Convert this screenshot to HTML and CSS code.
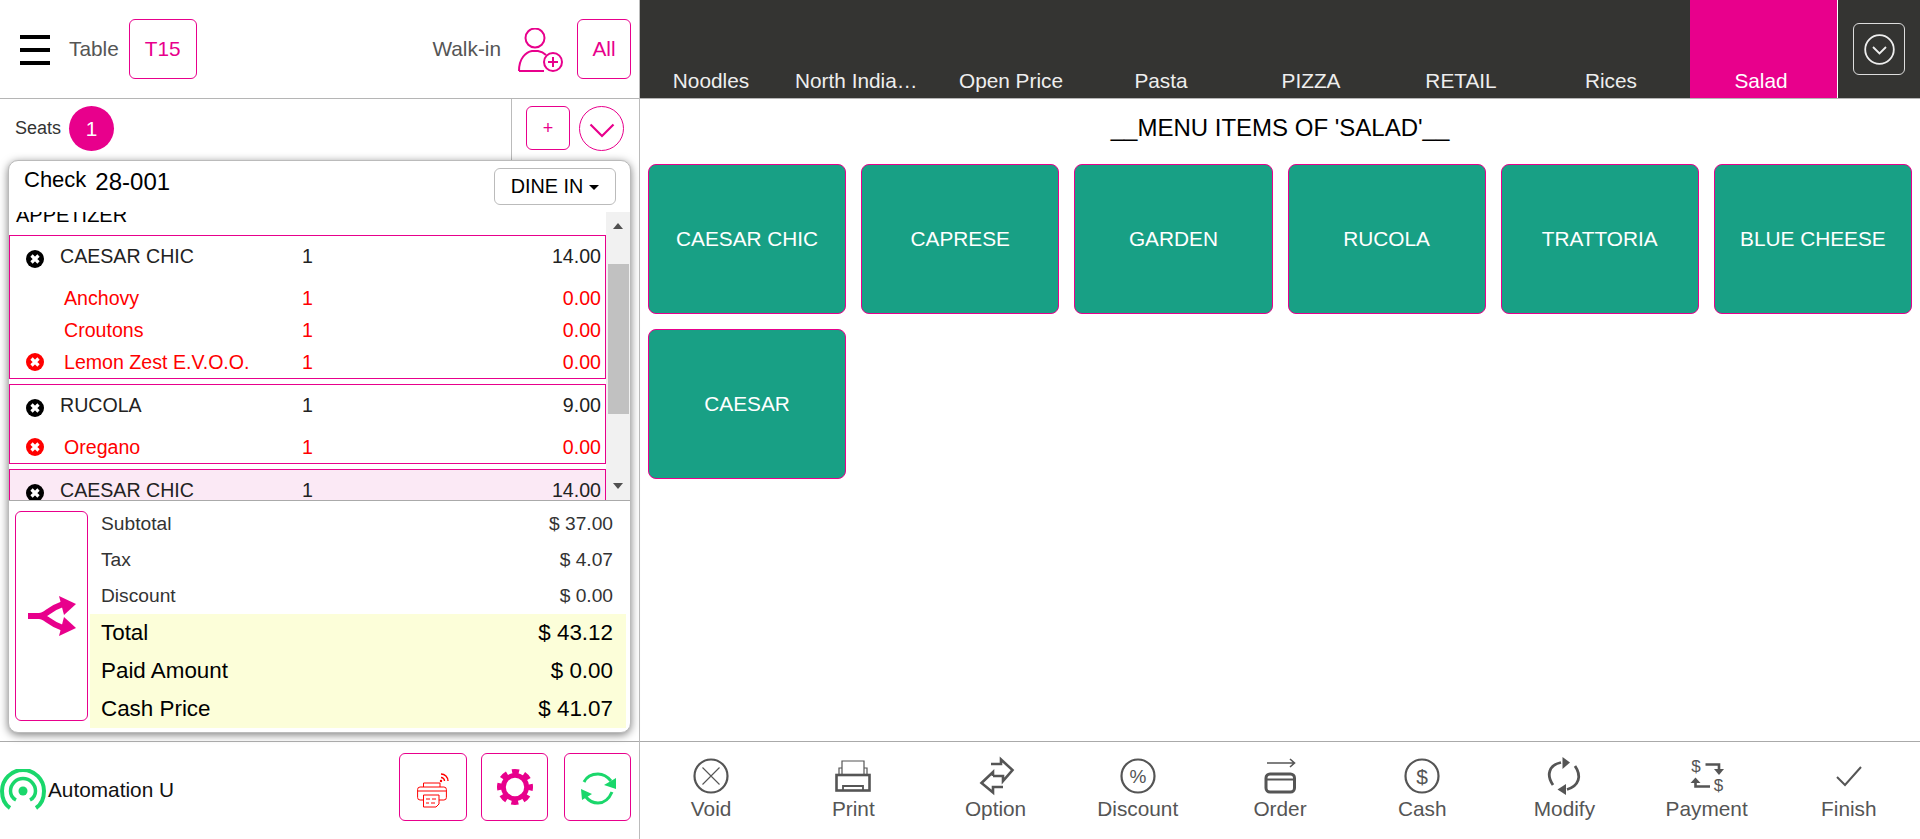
FILE: index.html
```html
<!DOCTYPE html>
<html lang="en">

<head>
    <meta charset="UTF-8">
    <title>POS Menu</title>
    <link rel="stylesheet" href="styles.css">
</head>

<body>
    <div class="app">
        <!-- Left: order -->
        <section class="order">
            <header class="orderHead">
                <div class="burger"><span></span><span></span><span></span></div>
                <span class="headLabel tableLabel">Table</span>
                <button class="pinkBtn tableBtn">T15</button>
                <span class="headLabel walkLabel">Walk-in</span>
                <svg class="personIcon" viewBox="0 0 46 44" fill="none" stroke="#e8008c" stroke-width="2">
                    <circle cx="17" cy="10" r="9.500" />
                    <path d="M1 43C1 30 8 24 14 23H20C23 23.500 26 25 28 27M1 43H26" />
                    <circle cx="35" cy="34" r="9" fill="#fff" />
                    <path d="M35 29V39M30 34H40" />
                </svg>
                <button class="pinkBtn allBtn">All</button>
            </header>

            <div class="seats">
                <div class="seatsLeft">
                    <span class="seatsLabel">Seats</span>
                    <span class="seatBadge">1</span>
                </div>
                <div class="seatsRight">
                    <button class="pinkBtn addSeat">+</button>
                    <button class="pinkBtn seatToggle">
                        <svg width="26" height="15" viewBox="0 0 26 15" fill="none" stroke="#e8008c" stroke-width="2.200">
                            <path d="M1.500 1.500L13 13L24.500 1.500" />
                        </svg>
                    </button>
                </div>
            </div>

            <div class="checkCard">
                <div class="checkHead">
                    <span class="checkLabel">Check</span>
                    <span class="checkNo">28-001</span>
                    <button class="dineBtn">DINE IN<i class="caret"></i></button>
                </div>

                <div class="listWrap">
                    <div class="list">
                        <div class="listInner">
                            <div class="course">APPETIZER</div>

                            <div class="item">
                                <div class="line main">
                                    <svg class="xIcon" viewBox="0 0 18 18"><circle cx="9" cy="9" r="9" fill="#000" /><path d="M5.500 5.500L12.500 12.500M12.500 5.500L5.500 12.500" stroke="#fff" stroke-width="3.200" /></svg>
                                    <span class="name">CAESAR CHIC</span><span class="qty">1</span><span class="price">14.00</span>
                                </div>
                                <div class="line mod">
                                    <span class="noIcon"></span>
                                    <span class="name">Anchovy</span><span class="qty">1</span><span class="price">0.00</span>
                                </div>
                                <div class="line mod">
                                    <span class="noIcon"></span>
                                    <span class="name">Croutons</span><span class="qty">1</span><span class="price">0.00</span>
                                </div>
                                <div class="line mod">
                                    <svg class="xIcon" viewBox="0 0 18 18"><circle cx="9" cy="9" r="9" fill="#f00" /><path d="M5.500 5.500L12.500 12.500M12.500 5.500L5.500 12.500" stroke="#fff" stroke-width="3.200" /></svg>
                                    <span class="name">Lemon Zest E.V.O.O.</span><span class="qty">1</span><span class="price">0.00</span>
                                </div>
                            </div>

                            <div class="item">
                                <div class="line main">
                                    <svg class="xIcon" viewBox="0 0 18 18"><circle cx="9" cy="9" r="9" fill="#000" /><path d="M5.500 5.500L12.500 12.500M12.500 5.500L5.500 12.500" stroke="#fff" stroke-width="3.200" /></svg>
                                    <span class="name">RUCOLA</span><span class="qty">1</span><span class="price">9.00</span>
                                </div>
                                <div class="line mod">
                                    <svg class="xIcon" viewBox="0 0 18 18"><circle cx="9" cy="9" r="9" fill="#f00" /><path d="M5.500 5.500L12.500 12.500M12.500 5.500L5.500 12.500" stroke="#fff" stroke-width="3.200" /></svg>
                                    <span class="name">Oregano</span><span class="qty">1</span><span class="price">0.00</span>
                                </div>
                            </div>

                            <div class="item selected">
                                <div class="line main">
                                    <svg class="xIcon" viewBox="0 0 18 18"><circle cx="9" cy="9" r="9" fill="#000" /><path d="M5.500 5.500L12.500 12.500M12.500 5.500L5.500 12.500" stroke="#fff" stroke-width="3.200" /></svg>
                                    <span class="name">CAESAR CHIC</span><span class="qty">1</span><span class="price">14.00</span>
                                </div>
                            </div>
                        </div>
                    </div>
                    <div class="scrollbar">
                        <i class="arrowUp"></i>
                        <div class="thumb"></div>
                        <i class="arrowDown"></i>
                    </div>
                </div>

                <div class="totals">
                    <button class="pinkBtn splitBtn">
                        <svg width="48" height="40" viewBox="0 0 48 40" fill="#e8008c">
                            <path d="M0 20H11C18 20 20 13 35 8M11 20C18 20 20 27 35 32" fill="none" stroke="#e8008c" stroke-width="6" />
                            <path d="M31 0L48 8L36 19Z" />
                            <path d="M31 40L48 32L36 21Z" />
                        </svg>
                    </button>
                    <div class="totalRows">
                        <div class="sumRow"><span>Subtotal</span><span>$ 37.00</span></div>
                        <div class="sumRow"><span>Tax</span><span>$ 4.07</span></div>
                        <div class="sumRow"><span>Discount</span><span>$ 0.00</span></div>
                        <div class="band">
                            <div class="bandRow"><span>Total</span><span>$ 43.12</span></div>
                            <div class="bandRow"><span>Paid Amount</span><span>$ 0.00</span></div>
                            <div class="bandRow"><span>Cash Price</span><span>$ 41.07</span></div>
                        </div>
                    </div>
                </div>
            </div>

            <footer class="orderFoot">
                <svg class="signal" width="46" height="42" viewBox="0 0 46 42" fill="none" stroke="#1ad76b">
                    <path d="M10 39C4 35 2 28 2 22A21 21 0 0 1 44 22C44 28 42 35 36 39" stroke-width="4" />
                    <path d="M16 31C12 29 10.500 25 10.500 22A12.500 12.500 0 0 1 35.500 22C35.500 25 34 29 30 31" stroke-width="3.500" />
                    <circle cx="23" cy="22" r="4.500" fill="#1ad76b" stroke="none" />
                </svg>
                <span class="userName">Automation U</span>
                <button class="pinkBtn footBtn printerBtn">
                    <svg class="printerIcon" width="32" height="38" viewBox="0 0 32 38" fill="none" stroke="#f00" stroke-width="1">
                        <path d="M6.500 17V13H23V17" />
                        <rect x="0.600" y="17" width="28.800" height="13" rx="2.500" />
                        <path d="M1 21H29" />
                        <path d="M6.500 25H22V34L19 37H6.500Z" fill="#fff" />
                        <path d="M9 29H13M15 29H19M9 33H12M14 33H18" />
                        <circle cx="24" cy="11" r="1.200" fill="#f00" stroke="none" />
                        <path d="M24 7.500A3.500 3.500 0 0 1 27.500 11M24 4A7 7 0 0 1 31 11" stroke-width="1.400" />
                    </svg>
                </button>
                <button class="pinkBtn footBtn gearBtn">
                    <svg width="36" height="36" viewBox="0 0 36 36" fill="none" stroke="#e8008c">
                        <circle cx="18" cy="18" r="11.600" stroke-width="4.800" />
                        <circle cx="18" cy="18" r="15.500" stroke-width="5" stroke-dasharray="7 5.180" stroke-dashoffset="3.500" />
                    </svg>
                </button>
                <button class="pinkBtn footBtn refreshBtn">
                    <svg width="36" height="36" viewBox="0 0 36 36" fill="none" stroke="#1ad76b" stroke-width="3">
                        <path d="M4 13C7 7 12 5 18 5C23 5 27 7 31 12" />
                        <path d="M32 23C29 30 24 34 18 34C13 34 9 32 6 28" />
                        <path d="M36 9L36 20L24 16Z" fill="#1ad76b" stroke="none" />
                        <path d="M1 20L12 25L2 31Z" fill="#1ad76b" stroke="none" />
                    </svg>
                </button>
            </footer>
        </section>

        <!-- Right: menu -->
        <section class="menu">
            <nav class="tabBar">
                <div class="tabs">
                    <a class="tab">Noodles</a>
                    <a class="tab tabLong">North India…</a>
                    <a class="tab">Open Price</a>
                    <a class="tab">Pasta</a>
                    <a class="tab">PIZZA</a>
                    <a class="tab">RETAIL</a>
                    <a class="tab">Rices</a>
                    <a class="tab active">Salad</a>
                </div>
                <div class="tabMore">
                    <button class="moreBtn">
                        <svg width="31" height="31" viewBox="0 0 31 31" fill="none" stroke="#eee" stroke-width="1.800">
                            <circle cx="15.500" cy="15.500" r="14.300" />
                            <path d="M9 13L15.500 19.500L22 13" />
                        </svg>
                    </button>
                </div>
            </nav>

            <div class="menuBody">
                <h2 class="menuTitle">__MENU ITEMS OF 'SALAD'__</h2>
                <div class="menuGrid">
                    <button class="menuItem">CAESAR CHIC</button>
                    <button class="menuItem">CAPRESE</button>
                    <button class="menuItem">GARDEN</button>
                    <button class="menuItem">RUCOLA</button>
                    <button class="menuItem">TRATTORIA</button>
                    <button class="menuItem">BLUE CHEESE</button>
                    <button class="menuItem">CAESAR</button>
                </div>
            </div>

            <footer class="actions">
                <div class="action">
                    <svg viewBox="0 0 36 36" fill="none" stroke="#555">
                        <circle cx="18" cy="18" r="16.500" stroke-width="2.200" />
                        <path d="M9.500 9.500L26.500 26.500M26.500 9.500L9.500 26.500" stroke-width="1.100" />
                    </svg>
                    <span>Void</span>
                </div>
                <div class="action">
                    <svg viewBox="0 0 36 36" fill="none" stroke="#555">
                        <path d="M7 16V3H29V16" stroke-width="1.200" />
                        <path d="M4 16V10H7M32 16V10H29" stroke-width="1.200" />
                        <rect x="1.500" y="17" width="33" height="15.500" stroke-width="2.600" />
                        <path d="M8 32V28H28V32" stroke-width="1.800" />
                    </svg>
                    <span>Print</span>
                </div>
                <div class="action">
                    <svg viewBox="0 0 36 36" fill="none" stroke="#555" stroke-width="2.600">
                        <path d="M13 6H23V1.500L34.500 12L25 23V18H15" />
                        <path d="M25 29H15V34.500L3.500 25L15 14V18" />
                    </svg>
                    <span>Option</span>
                </div>
                <div class="action">
                    <svg viewBox="0 0 36 36" fill="none" stroke="#555">
                        <circle cx="18" cy="18" r="16.500" stroke-width="2.200" />
                        <text class="glyph" x="18" y="25" text-anchor="middle" font-size="19" fill="#555" stroke="none">%</text>
                    </svg>
                    <span>Discount</span>
                </div>
                <div class="action">
                    <svg viewBox="0 0 36 36" fill="none" stroke="#555">
                        <path d="M5 5H32M28 1L32.500 5L28 9" stroke-width="1.600" />
                        <rect x="4" y="16" width="28.500" height="18" rx="4" stroke-width="3" />
                        <path d="M4 21.500H32" stroke-width="2" />
                    </svg>
                    <span>Order</span>
                </div>
                <div class="action">
                    <svg viewBox="0 0 36 36" fill="none" stroke="#555">
                        <circle cx="18" cy="18" r="16.500" stroke-width="2.200" />
                        <text class="glyph" x="18" y="25.500" text-anchor="middle" font-size="21" fill="#555" stroke="none">$</text>
                    </svg>
                    <span>Cash</span>
                </div>
                <div class="action">
                    <svg viewBox="0 0 36 36" fill="none" stroke="#555">
                        <path d="M7 27C0 17 3 7 15 4.500" stroke-width="2.800" />
                        <path d="M29 8C36 18 33 28 21 31.500" stroke-width="2.800" />
                        <path d="M16.500 -1L24 4.500L16.500 11Z" fill="#555" stroke="none" />
                        <path d="M20 26L11.500 31.500L20 37Z" fill="#555" stroke="none" />
                    </svg>
                    <span>Modify</span>
                </div>
                <div class="action">
                    <svg viewBox="0 0 36 36" fill="none" stroke="#555">
                        <text class="glyph" x="7" y="13.500" text-anchor="middle" font-size="17" fill="#555" stroke="none">$</text>
                        <text class="glyph" x="29.500" y="32.500" text-anchor="middle" font-size="17" fill="#555" stroke="none">$</text>
                        <path d="M16.500 6.500H30V12" stroke-width="2.600" />
                        <path d="M25 11H35L30 17Z" fill="#555" stroke="none" />
                        <path d="M21 28.500H6.500V24" stroke-width="2.600" />
                        <path d="M1.500 25H11.500L6.500 19.500Z" fill="#555" stroke="none" />
                    </svg>
                    <span>Payment</span>
                </div>
                <div class="action">
                    <svg viewBox="0 0 36 36" fill="none" stroke="#555" stroke-width="2">
                        <path d="M6 19L14 27L30 9" />
                    </svg>
                    <span>Finish</span>
                </div>
            </footer>
        </section>
    </div>
</body>

</html>
```
FILE: styles.css
```css
* {
    box-sizing: border-box;
}

html,
body {
    margin: 0;
    height: 100%;
    overflow: hidden;
    background-color: white;
    font-family: "Liberation Sans", Arial, sans-serif;
}

button {
    font: inherit;
    padding: 0;
    background: none;
    cursor: pointer;
}

.app {
    display: flex;
    width: 1920px;
    height: 839px;
}

.pinkBtn {
    display: flex;
    align-items: center;
    justify-content: center;
    flex-shrink: 0;
    border: 1px solid #e8008c;
    border-radius: 6px;
    background-color: white;
    color: #e8008c;
}

/* Left panel */
.order {
    display: flex;
    flex-direction: column;
    width: 640px;
    border-right: 1px solid #bbb;
}

.orderHead {
    display: flex;
    align-items: center;
    height: 99px;
    padding: 0 8px 0 20px;
    border-bottom: 1px solid #b5b5b5;
}

.burger {
    display: flex;
    flex-direction: column;
    gap: 9.500px;
    width: 30px;
    margin-top: 2px;
}

.burger span {
    height: 3.500px;
    background-color: black;
}

.headLabel {
    font-size: 20.800px;
    color: #555;
}

.tableLabel {
    margin-left: 19px;
}

.tableBtn {
    width: 68px;
    height: 60px;
    margin-left: 10px;
    font-size: 20.800px;
}

.walkLabel {
    margin-left: auto;
}

.personIcon {
    width: 46px;
    height: 44px;
    margin: 2px 13px 0 17px;
}

.allBtn {
    width: 54px;
    height: 60px;
    font-size: 20.800px;
}

.seats {
    display: flex;
    height: 61px;
}

.seatsLeft {
    display: flex;
    flex: 1;
    align-items: center;
    gap: 8px;
    padding-left: 15px;
    padding-bottom: 2px;
}

.seatsLabel {
    font-size: 18px;
    color: #333;
}

.seatBadge {
    display: flex;
    align-items: center;
    justify-content: center;
    width: 45px;
    height: 45px;
    border-radius: 50%;
    background-color: #e8008c;
    color: white;
    font-size: 20.800px;
}

.seatsRight {
    display: flex;
    align-items: flex-start;
    gap: 9px;
    width: 128px;
    padding: 7px 0 0 14px;
    border-left: 1px solid #bbb;
}

.addSeat {
    width: 44px;
    height: 44px;
    font-size: 18px;
}

.seatToggle {
    width: 45px;
    height: 45px;
    border-radius: 50%;
    padding-top: 3px;
}

/* Check card */
.checkCard {
    display: flex;
    flex-direction: column;
    width: 623px;
    height: 573px;
    margin-left: 8px;
    border: 1px solid #bbb;
    border-radius: 10px;
    background-color: white;
    box-shadow: 0 2px 8px rgba(0, 0, 0, 0.5);
    overflow: hidden;
}

.checkHead {
    display: flex;
    height: 51px;
    padding: 7px 14px 0 15px;
}

.checkLabel {
    font-size: 22px;
    line-height: 24px;
}

.checkNo {
    margin: 1px 0 0 9px;
    font-size: 24px;
    line-height: 26px;
}

.dineBtn {
    display: flex;
    align-items: center;
    justify-content: center;
    gap: 6px;
    width: 122px;
    height: 37px;
    margin-left: auto;
    border: 1px solid #bbb;
    border-radius: 6px;
    background-color: white;
    font-size: 19.800px;
    color: black;
}

.caret {
    width: 0;
    height: 0;
    margin-top: 2px;
    border-top: 5.500px solid black;
    border-left: 5.500px solid transparent;
    border-right: 5.500px solid transparent;
}

.listWrap {
    display: flex;
    height: 289px;
    border-bottom: 1px solid #aaa;
}

.list {
    flex: 1;
    overflow: hidden;
}

/* list is scrolled down a little in the picture */
.listInner {
    margin-top: -9px;
}

.course {
    padding-left: 7px;
    height: 32px;
    font-size: 20px;
    line-height: 24px;
    color: black;
}

.item {
    margin-bottom: 5px;
    border: 1px solid #e8008c;
}

.item.selected {
    background-color: #fbe9f5;
}

.line {
    display: grid;
    grid-template-columns: 50px 242px 1fr 60px;
    padding-right: 4px;
    font-size: 19.600px;
}

.main {
    height: 46px;
    padding-top: 8px;
    line-height: 24px;
    color: #222;
}

.mod {
    height: 32px;
    align-items: center;
    color: #f00;
}

.xIcon {
    width: 18px;
    height: 18px;
    margin-left: 16px;
}

.main .xIcon {
    margin-top: 6px;
}

.mod .name {
    padding-left: 4px;
}

.price {
    text-align: right;
}

.scrollbar {
    display: flex;
    flex-direction: column;
    align-items: center;
    width: 24px;
    padding-top: 11px;
    background-color: #f1f1f1;
}

.arrowUp {
    border-bottom: 6px solid #505050;
    border-left: 5.500px solid transparent;
    border-right: 5.500px solid transparent;
}

.thumb {
    width: 21px;
    height: 150px;
    margin-top: 35px;
    background-color: #c1c1c1;
}

.arrowDown {
    margin-top: 69px;
    border-top: 6px solid #505050;
    border-left: 5.500px solid transparent;
    border-right: 5.500px solid transparent;
}

.totals {
    display: flex;
    flex: 1;
    padding: 5px 4px 2px 6px;
}

.splitBtn {
    width: 73px;
    height: 210px;
    margin: 5px 2px 0 0;
}

.totalRows {
    flex: 1;
}

.sumRow,
.bandRow {
    display: flex;
    align-items: center;
    justify-content: space-between;
    padding: 0 13px 0 11px;
}

.sumRow {
    height: 36px;
    font-size: 19.200px;
    color: #333;
}

.band {
    background-color: #fcfed9;
}

.bandRow {
    height: 38px;
    font-size: 22.400px;
    color: black;
}

.orderFoot {
    display: flex;
    align-items: center;
    flex: 1;
    margin-top: 8px;
    padding: 0 8px 8px 0;
    border-top: 1px solid #aaa;
}

.signal {
    margin-top: 6px;
}

.userName {
    margin: 6px 0 0 2px;
    font-size: 20.800px;
    color: #111;
}

.footBtn {
    width: 67px;
    height: 68px;
}

.printerBtn {
    margin-left: auto;
    width: 68px;
}

.printerIcon {
    margin-top: 5px;
    overflow: visible;
}

.gearBtn {
    margin-left: 14px;
}

.refreshBtn {
    margin-left: 16px;
}

/* Right panel */
.menu {
    display: flex;
    flex-direction: column;
    flex: 1;
}

.tabBar {
    display: flex;
    height: 99px;
    border-bottom: 1px solid #b5b5b5;
    background-color: #343432;
}

.tabs {
    display: flex;
    flex: 1;
    gap: 3px;
}

.tab {
    width: 147px;
    padding: 68px 9px 0 4px;
    font-size: 20.800px;
    line-height: 26px;
    text-align: center;
    white-space: nowrap;
    color: #eee;
}

.tabLong {
    padding-left: 5px;
    text-align: left;
}

.tab.active {
    background-color: #e8008c;
    color: white;
}

.tabMore {
    display: flex;
    align-items: flex-start;
    justify-content: center;
    width: 83px;
    padding-top: 23px;
    border-left: 1px solid white;
}

.moreBtn {
    display: flex;
    align-items: center;
    justify-content: center;
    width: 52px;
    height: 52px;
    border: 1px solid #ddd;
    border-radius: 6px;
}

.menuBody {
    flex: 1;
    padding: 0 8px;
}

.menuTitle {
    height: 65px;
    margin: 0;
    padding-top: 15px;
    font-size: 24px;
    font-weight: normal;
    line-height: 28px;
    text-align: center;
    color: black;
}

.menuGrid {
    display: grid;
    grid-template-columns: repeat(6, 1fr);
    grid-auto-rows: 150px;
    gap: 15px;
}

.menuItem {
    border: 1px solid #e8008c;
    border-radius: 8px;
    background-color: #18a085;
    font-size: 20.800px;
    color: white;
}

.actions {
    display: flex;
    height: 98px;
    border-top: 1px solid #aaa;
}

.action {
    display: flex;
    flex: 1;
    flex-direction: column;
    align-items: center;
    padding-top: 16px;
    font-size: 20.800px;
    line-height: 24px;
    color: #555;
}

.action svg {
    width: 36px;
    height: 36px;
    margin-bottom: 3px;
    overflow: visible;
}

.glyph {
    font-family: "Liberation Sans", Arial, sans-serif;
}
```
